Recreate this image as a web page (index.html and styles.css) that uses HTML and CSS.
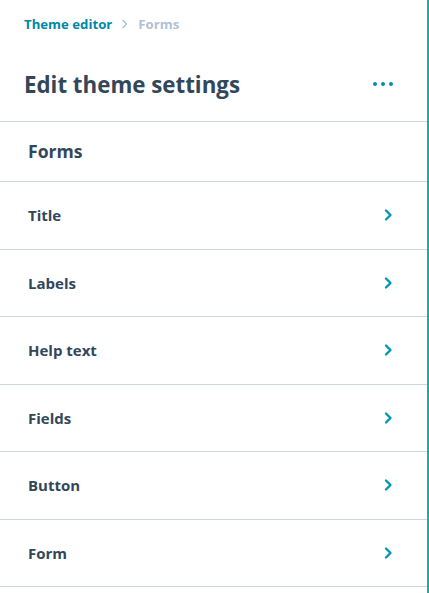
FILE: index.html
```html
<!DOCTYPE html>
<html lang="en">
<head>
<meta charset="utf-8">
<title>Edit theme settings</title>
<link rel="stylesheet" href="styles.css">
</head>
<body>
<aside class="panel">
  <nav class="crumbs">
    <a class="crumb-link" href="#">Theme editor</a>
    <svg class="crumb-sep" width="8" height="10" viewBox="0 0 8 10"><path d="M2 1.5 L5.5 5 L2 8.5" fill="none" stroke="#b0c1d4" stroke-width="1.5" stroke-linecap="round" stroke-linejoin="round"/></svg>
    <span class="crumb-current">Forms</span>
  </nav>
  <header class="head">
    <h1 class="title">Edit theme settings</h1>
    <button class="more" aria-label="More">
      <span class="dot"></span><span class="dot"></span><span class="dot"></span>
    </button>
  </header>
  <div class="section-title">Forms</div>
  <ul class="list">
    <li class="item"><span>Title</span><svg class="chev" width="10" height="14" viewBox="0 0 10 14"><path d="M3 2.5 L7.5 7 L3 11.5" fill="none" stroke="#0098b5" stroke-width="2.4" stroke-linecap="round" stroke-linejoin="round"/></svg></li>
    <li class="item"><span>Labels</span><svg class="chev" width="10" height="14" viewBox="0 0 10 14"><path d="M3 2.5 L7.5 7 L3 11.5" fill="none" stroke="#0098b5" stroke-width="2.4" stroke-linecap="round" stroke-linejoin="round"/></svg></li>
    <li class="item"><span>Help text</span><svg class="chev" width="10" height="14" viewBox="0 0 10 14"><path d="M3 2.5 L7.5 7 L3 11.5" fill="none" stroke="#0098b5" stroke-width="2.4" stroke-linecap="round" stroke-linejoin="round"/></svg></li>
    <li class="item"><span>Fields</span><svg class="chev" width="10" height="14" viewBox="0 0 10 14"><path d="M3 2.5 L7.5 7 L3 11.5" fill="none" stroke="#0098b5" stroke-width="2.4" stroke-linecap="round" stroke-linejoin="round"/></svg></li>
    <li class="item"><span>Button</span><svg class="chev" width="10" height="14" viewBox="0 0 10 14"><path d="M3 2.5 L7.5 7 L3 11.5" fill="none" stroke="#0098b5" stroke-width="2.4" stroke-linecap="round" stroke-linejoin="round"/></svg></li>
    <li class="item"><span>Form</span><svg class="chev" width="10" height="14" viewBox="0 0 10 14"><path d="M3 2.5 L7.5 7 L3 11.5" fill="none" stroke="#0098b5" stroke-width="2.4" stroke-linecap="round" stroke-linejoin="round"/></svg></li>
  </ul>
</aside>
</body>
</html>
```

FILE: styles.css
```css
* { box-sizing: border-box; }
html, body { margin: 0; padding: 0; background: #fff; }
body {
  font-family: "Open Sans", "Lato", sans-serif;
  color: #33475b;
}
.panel {
  width: 429px;
  min-height: 593px;
  border-right: 2px solid #0fb3a6;
  background: #fff;
}
.crumbs {
  display: flex;
  align-items: center;
  gap: 8px;
  padding: 14px 24px 0 24px;
  height: 33px;
  font-size: 13.2px;
  font-weight: 700;
}
.crumb-link { color: #0087a8; text-decoration: none; }
.crumb-sep { margin: 0 1px; }
.crumb-current { color: #b0c1d4; }
.head {
  display: flex;
  align-items: center;
  justify-content: space-between;
  height: 89px;
  padding: 14px 34px 0 24px;
  border-bottom: 1px solid #cbd6e2;
}
.title {
  margin: 0;
  font-size: 22.3px;
  font-weight: 700;
  color: #33475b;
}
.more {
  display: flex;
  gap: 4px;
  padding: 0;
  border: 0;
  background: none;
}
.dot {
  width: 4px;
  height: 4px;
  border-radius: 50%;
  background: #0091ae;
}
.section-title {
  height: 60px;
  display: flex;
  align-items: center;
  padding: 0 28px 2px;
  font-size: 17.6px;
  font-weight: 700;
  border-bottom: 1px solid #cbd6e2;
}
.list { list-style: none; margin: 0; padding: 0; }
.item {
  display: flex;
  align-items: center;
  justify-content: space-between;
  height: 67.5px;
  padding: 0 34px 0 28px;
  font-size: 15px;
  font-weight: 700;
  border-bottom: 1px solid #cbd6e2;
}
.chev { display: block; }
```
